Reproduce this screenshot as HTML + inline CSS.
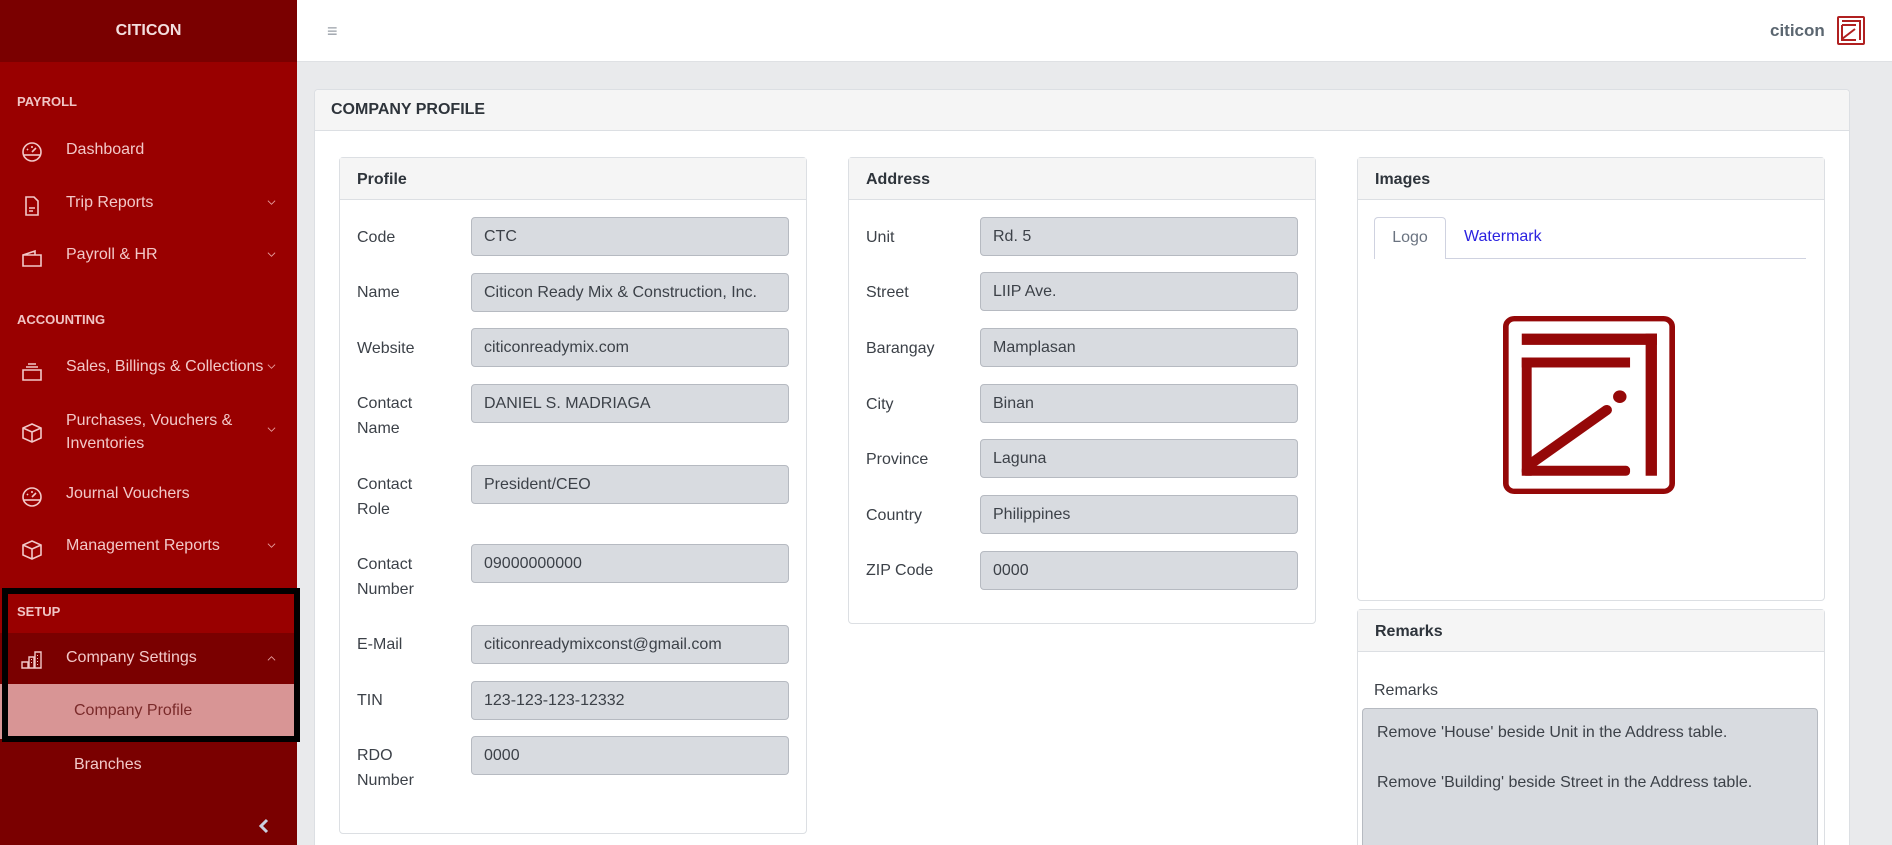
<!DOCTYPE html>
<html style="width:1892px;height:845px;overflow:hidden"><head><meta charset="utf-8"><style>
*{box-sizing:border-box;margin:0;padding:0}
body{width:1892px;height:845px;overflow:hidden;background:#e9eaec;font-family:"Liberation Sans",sans-serif;position:relative;color:#3c4148}
.a{position:absolute}
#sb{left:0;top:0;width:297px;height:845px;background:#990000}
#sbh{left:0;top:0;width:297px;height:62px;background:#7a0000;color:#f3dede;font-weight:bold;font-size:16px;text-align:center;line-height:62px}
.sec{color:#f0c4c4;font-weight:bold;font-size:13px;left:17px}
.mi{color:#f2c8c8;font-size:16px;left:66px}
.ic{left:20px;width:24px;height:24px}
.chev{left:267px;width:9px;height:9px}
#top{left:297px;top:0;width:1595px;height:62px;background:#fff;border-bottom:1px solid #dfe1e4}
.card{background:#fff;border:1px solid #dcdfe3;border-radius:4px}
.ch{background:#f5f5f5;border-bottom:1px solid #dcdfe3;font-weight:bold;font-size:16px;color:#2e343b;padding-left:17px;line-height:43px;height:42px}
.lb{font-size:16px;color:#3c4148;line-height:25px}
.in{background:#d8dbe0;border:1px solid #b6bac1;border-radius:4px;height:39px;font-size:16px;line-height:37px;padding-left:12px;color:#3c4148}
</style></head><body>
<div id="sb" class="a"></div>
<div id="sbh" class="a">CITICON</div>
<div class="a sec" style="top:94px">PAYROLL</div>
<svg class="a ic" style="top:140px" viewBox="0 0 24 24" fill="none" stroke="#f2c8c8" stroke-width="1.6"><circle cx="12" cy="12" r="9"/><path d="M4 15h16" /><path d="M12 12l4-4M7 9l1 1M12 6v2"/></svg>
<div class="a mi" style="top:141px">Dashboard</div>
<svg class="a ic" style="top:194px" viewBox="0 0 24 24" fill="none" stroke="#f2c8c8" stroke-width="1.6"><path d="M6 3h8l4 4v14H6z"/><path d="M9 14h6M9 17h4"/></svg>
<div class="a mi" style="top:194px">Trip Reports</div>
<svg class="a chev" style="top:198px" viewBox="0 0 10 10" fill="none" stroke="#e8a0a0"><path d="M1 3l4 4 4-4"/></svg>
<svg class="a ic" style="top:246px" viewBox="0 0 24 24" fill="none" stroke="#f2c8c8" stroke-width="1.6"><path d="M3 9h18v11H3zM3 9l12-4v4"/></svg>
<div class="a mi" style="top:246px">Payroll &amp; HR</div>
<svg class="a chev" style="top:250px" viewBox="0 0 10 10" fill="none" stroke="#e8a0a0"><path d="M1 3l4 4 4-4"/></svg>
<div class="a sec" style="top:312px">ACCOUNTING</div>
<svg class="a ic" style="top:359px" viewBox="0 0 24 24" fill="none" stroke="#f2c8c8" stroke-width="1.6"><path d="M3 11h18v10H3zM6 8h12M8 5h8"/></svg>
<div class="a mi" style="top:358px">Sales, Billings &amp; Collections</div>
<svg class="a chev" style="top:362px" viewBox="0 0 10 10" fill="none" stroke="#e8a0a0"><path d="M1 3l4 4 4-4"/></svg>
<svg class="a ic" style="top:421px" viewBox="0 0 24 24" fill="none" stroke="#f2c8c8" stroke-width="1.6"><path d="M12 3l9 4v10l-9 4-9-4V7zM3 7l9 4 9-4M12 11v10"/></svg>
<div class="a mi" style="top:409px;line-height:23px">Purchases, Vouchers &amp;<br>Inventories</div>
<svg class="a chev" style="top:425px" viewBox="0 0 10 10" fill="none" stroke="#e8a0a0"><path d="M1 3l4 4 4-4"/></svg>
<svg class="a ic" style="top:485px" viewBox="0 0 24 24" fill="none" stroke="#f2c8c8" stroke-width="1.6"><circle cx="12" cy="12" r="9"/><path d="M4 15h16"/><path d="M12 12l4-4M7 9l1 1M12 6v2"/></svg>
<div class="a mi" style="top:485px">Journal Vouchers</div>
<svg class="a ic" style="top:538px" viewBox="0 0 24 24" fill="none" stroke="#f2c8c8" stroke-width="1.6"><path d="M12 3l9 4v10l-9 4-9-4V7zM3 7l9 4 9-4M12 11v10"/></svg>
<div class="a mi" style="top:537px">Management Reports</div>
<svg class="a chev" style="top:541px" viewBox="0 0 10 10" fill="none" stroke="#e8a0a0"><path d="M1 3l4 4 4-4"/></svg>
<div class="a" style="left:0;top:633px;width:297px;height:212px;background:#7a0000"></div>
<div class="a" style="left:0;top:684px;width:297px;height:55px;background:#d89595"></div>
<div class="a sec" style="top:604px">SETUP</div>
<svg class="a ic" style="top:648px" viewBox="0 0 24 24" fill="#f2c8c8"><path d="M2 20V14h6v6zM9 20V9h5v11zM15 20V4h6v16z" fill="none" stroke="#f2c8c8" stroke-width="1.4"/><path d="M11 11h1v1h-1zM11 14h1v1h-1zM17 7h1v1h-1zM17 10h1v1h-1zM17 13h1v1h-1zM17 16h1v1h-1z"/></svg>
<div class="a mi" style="top:649px">Company Settings</div>
<svg class="a chev" style="top:654px" viewBox="0 0 10 10" fill="none" stroke="#e8a0a0"><path d="M1 7l4-4 4 4"/></svg>
<div class="a" style="left:74px;top:702px;font-size:16px;color:#7a2a2a">Company Profile</div>
<div class="a" style="left:74px;top:756px;font-size:16px;color:#f2c8c8">Branches</div>
<svg class="a" style="left:258px;top:818px" width="12" height="16" viewBox="0 0 12 16" fill="none" stroke="#c9cfe0" stroke-width="3"><path d="M9 2L3 8l6 6"/></svg>
<div class="a" style="left:2px;top:588px;width:298px;height:154px;border:6px solid #000"></div>

<div id="top" class="a"></div>
<div class="a" style="left:327px;top:21px;font-size:18px;color:#9aa0a8">&#8801;</div>
<div class="a" style="left:1770px;top:21px;font-size:17px;font-weight:bold;color:#5b6670">citicon</div>
<svg class="a" style="left:1837px;top:16px" width="28" height="29" viewBox="0 0 28 29" fill="none" stroke="#b02020" stroke-width="2"><rect x="1" y="1" width="26" height="27" rx="1"/><path d="M5 5h18v19M5 9h14M5 9v15h14M5 23l13-10"/></svg>

<div class="a card" style="left:314px;top:89px;width:1536px;height:770px;border-bottom:none"></div>
<div class="a" style="left:315px;top:90px;width:1534px;height:41px;background:#f5f5f5;border-bottom:1px solid #dcdfe3;border-radius:4px 4px 0 0"></div>
<div class="a" style="left:331px;top:101px;font-weight:bold;font-size:16px;color:#2e343b">COMPANY PROFILE</div>

<div class="a card" style="left:339px;top:157px;width:468px;height:677px"><div class="ch">Profile</div></div>
<div class="a lb" style="left:357px;top:225px">Code</div><div class="a in" style="left:471px;top:217px;width:318px">CTC</div>
<div class="a lb" style="left:357px;top:280px">Name</div><div class="a in" style="left:471px;top:273px;width:318px">Citicon Ready Mix &amp; Construction, Inc.</div>
<div class="a lb" style="left:357px;top:336px">Website</div><div class="a in" style="left:471px;top:328px;width:318px">citiconreadymix.com</div>
<div class="a lb" style="left:357px;top:391px">Contact<br>Name</div><div class="a in" style="left:471px;top:384px;width:318px">DANIEL S. MADRIAGA</div>
<div class="a lb" style="left:357px;top:472px">Contact<br>Role</div><div class="a in" style="left:471px;top:465px;width:318px">President/CEO</div>
<div class="a lb" style="left:357px;top:552px">Contact<br>Number</div><div class="a in" style="left:471px;top:544px;width:318px">09000000000</div>
<div class="a lb" style="left:357px;top:632px">E-Mail</div><div class="a in" style="left:471px;top:625px;width:318px">citiconreadymixconst@gmail.com</div>
<div class="a lb" style="left:357px;top:688px">TIN</div><div class="a in" style="left:471px;top:681px;width:318px">123-123-123-12332</div>
<div class="a lb" style="left:357px;top:743px">RDO<br>Number</div><div class="a in" style="left:471px;top:736px;width:318px">0000</div>

<div class="a card" style="left:848px;top:157px;width:468px;height:467px"><div class="ch">Address</div></div>
<div class="a lb" style="left:866px;top:225px">Unit</div><div class="a in" style="left:980px;top:217px;width:318px">Rd. 5</div>
<div class="a lb" style="left:866px;top:280px">Street</div><div class="a in" style="left:980px;top:272px;width:318px">LIIP Ave.</div>
<div class="a lb" style="left:866px;top:336px">Barangay</div><div class="a in" style="left:980px;top:328px;width:318px">Mamplasan</div>
<div class="a lb" style="left:866px;top:392px">City</div><div class="a in" style="left:980px;top:384px;width:318px">Binan</div>
<div class="a lb" style="left:866px;top:447px">Province</div><div class="a in" style="left:980px;top:439px;width:318px">Laguna</div>
<div class="a lb" style="left:866px;top:503px">Country</div><div class="a in" style="left:980px;top:495px;width:318px">Philippines</div>
<div class="a lb" style="left:866px;top:558px">ZIP Code</div><div class="a in" style="left:980px;top:551px;width:318px">0000</div>

<div class="a card" style="left:1357px;top:157px;width:468px;height:444px"><div class="ch">Images</div></div>
<div class="a" style="left:1374px;top:258px;width:432px;height:1px;background:#cfd2e0"></div>
<div class="a" style="left:1374px;top:217px;width:72px;height:42px;background:#fff;border:1px solid #cfd2e0;border-bottom:none;border-radius:4px 4px 0 0;text-align:center;line-height:40px;font-size:16px;color:#6a7380">Logo</div>
<div class="a" style="left:1464px;top:228px;font-size:16px;color:#2b22e0">Watermark</div>
<svg class="a" style="left:1503px;top:316px" width="172" height="178" viewBox="467 497 486 536" preserveAspectRatio="none" fill="#950808">
<rect x="475" y="505" width="470" height="520" rx="24" fill="none" stroke="#950808" stroke-width="16"/>
<rect x="520" y="550" width="382" height="34"/><rect x="870" y="550" width="32" height="428"/>
<rect x="520" y="622" width="306" height="30"/><rect x="520" y="622" width="28" height="356"/>
<rect x="520" y="948" width="306" height="30" rx="12"/>
<path d="M548 940L760 780" stroke="#950808" stroke-width="30" stroke-linecap="round"/>
<circle cx="797" cy="740" r="19"/></svg>

<div class="a card" style="left:1357px;top:609px;width:468px;height:236px;border-bottom:none;border-radius:4px 4px 0 0"><div class="ch">Remarks</div></div>
<div class="a lb" style="left:1374px;top:678px">Remarks</div>
<div class="a" style="left:1362px;top:708px;width:456px;height:137px;background:#d8dbe0;border:1px solid #b6bac1;border-bottom:none;border-radius:4px 4px 0 0;padding:11px 0 0 14px;font-size:16px;line-height:25px;color:#3c4148">Remove 'House' beside Unit in the Address table.<br><br>Remove 'Building' beside Street in the Address table.</div>
</body></html>
